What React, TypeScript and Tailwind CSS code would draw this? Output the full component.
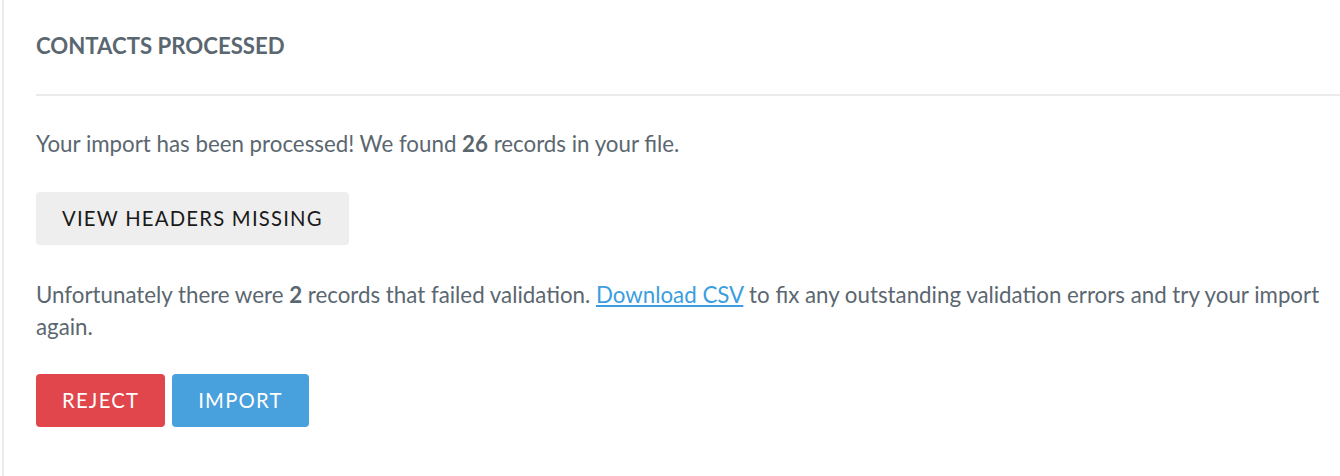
export default function App() {
  return (
    <div className="min-h-[476px] w-[1340px] bg-white font-['Lato',sans-serif]">
      <div className="ml-[2px] min-h-[476px] border-l-2 border-[#ececec] pl-[32px] pt-[30px] pb-[48px]">
        <h2 className="text-[22.2px] font-bold uppercase leading-[32px] text-[#5b6770]">
          Contacts Processed
        </h2>
        <div className="mt-[32px] border-t-2 border-[#ebebeb]" />
        <p className="mt-[32px] text-[22.3px] leading-[32px] text-[#5b6770]">
          Your import has been processed! We found <b>26</b> records in your file.
        </p>
        <button className="mt-[32px] h-[53px] rounded-[4px] bg-[#eeeeee] px-[26px] text-[20.3px] tracking-[0.06em] text-[#1a1a1a]">
          VIEW HEADERS MISSING
        </button>
        <p className="mt-[34px] text-[22.3px] leading-[32px] text-[#5b6770]">
          Unfortunately there were <b>2</b> records that failed validation.{" "}
          <a href="#" className="text-[#3b9ee0] underline">
            Download CSV
          </a>{" "}
          to fix any outstanding validation errors and try your import again.
        </p>
        <div className="mt-[31px] flex gap-[7px]">
          <button className="h-[53px] rounded-[4px] bg-[#e0464b] px-[26px] text-[20.3px] tracking-[0.06em] text-white">
            REJECT
          </button>
          <button className="h-[53px] rounded-[4px] bg-[#48a0dc] px-[26px] text-[20.3px] tracking-[0.06em] text-white">
            IMPORT
          </button>
        </div>
      </div>
    </div>
  );
}
